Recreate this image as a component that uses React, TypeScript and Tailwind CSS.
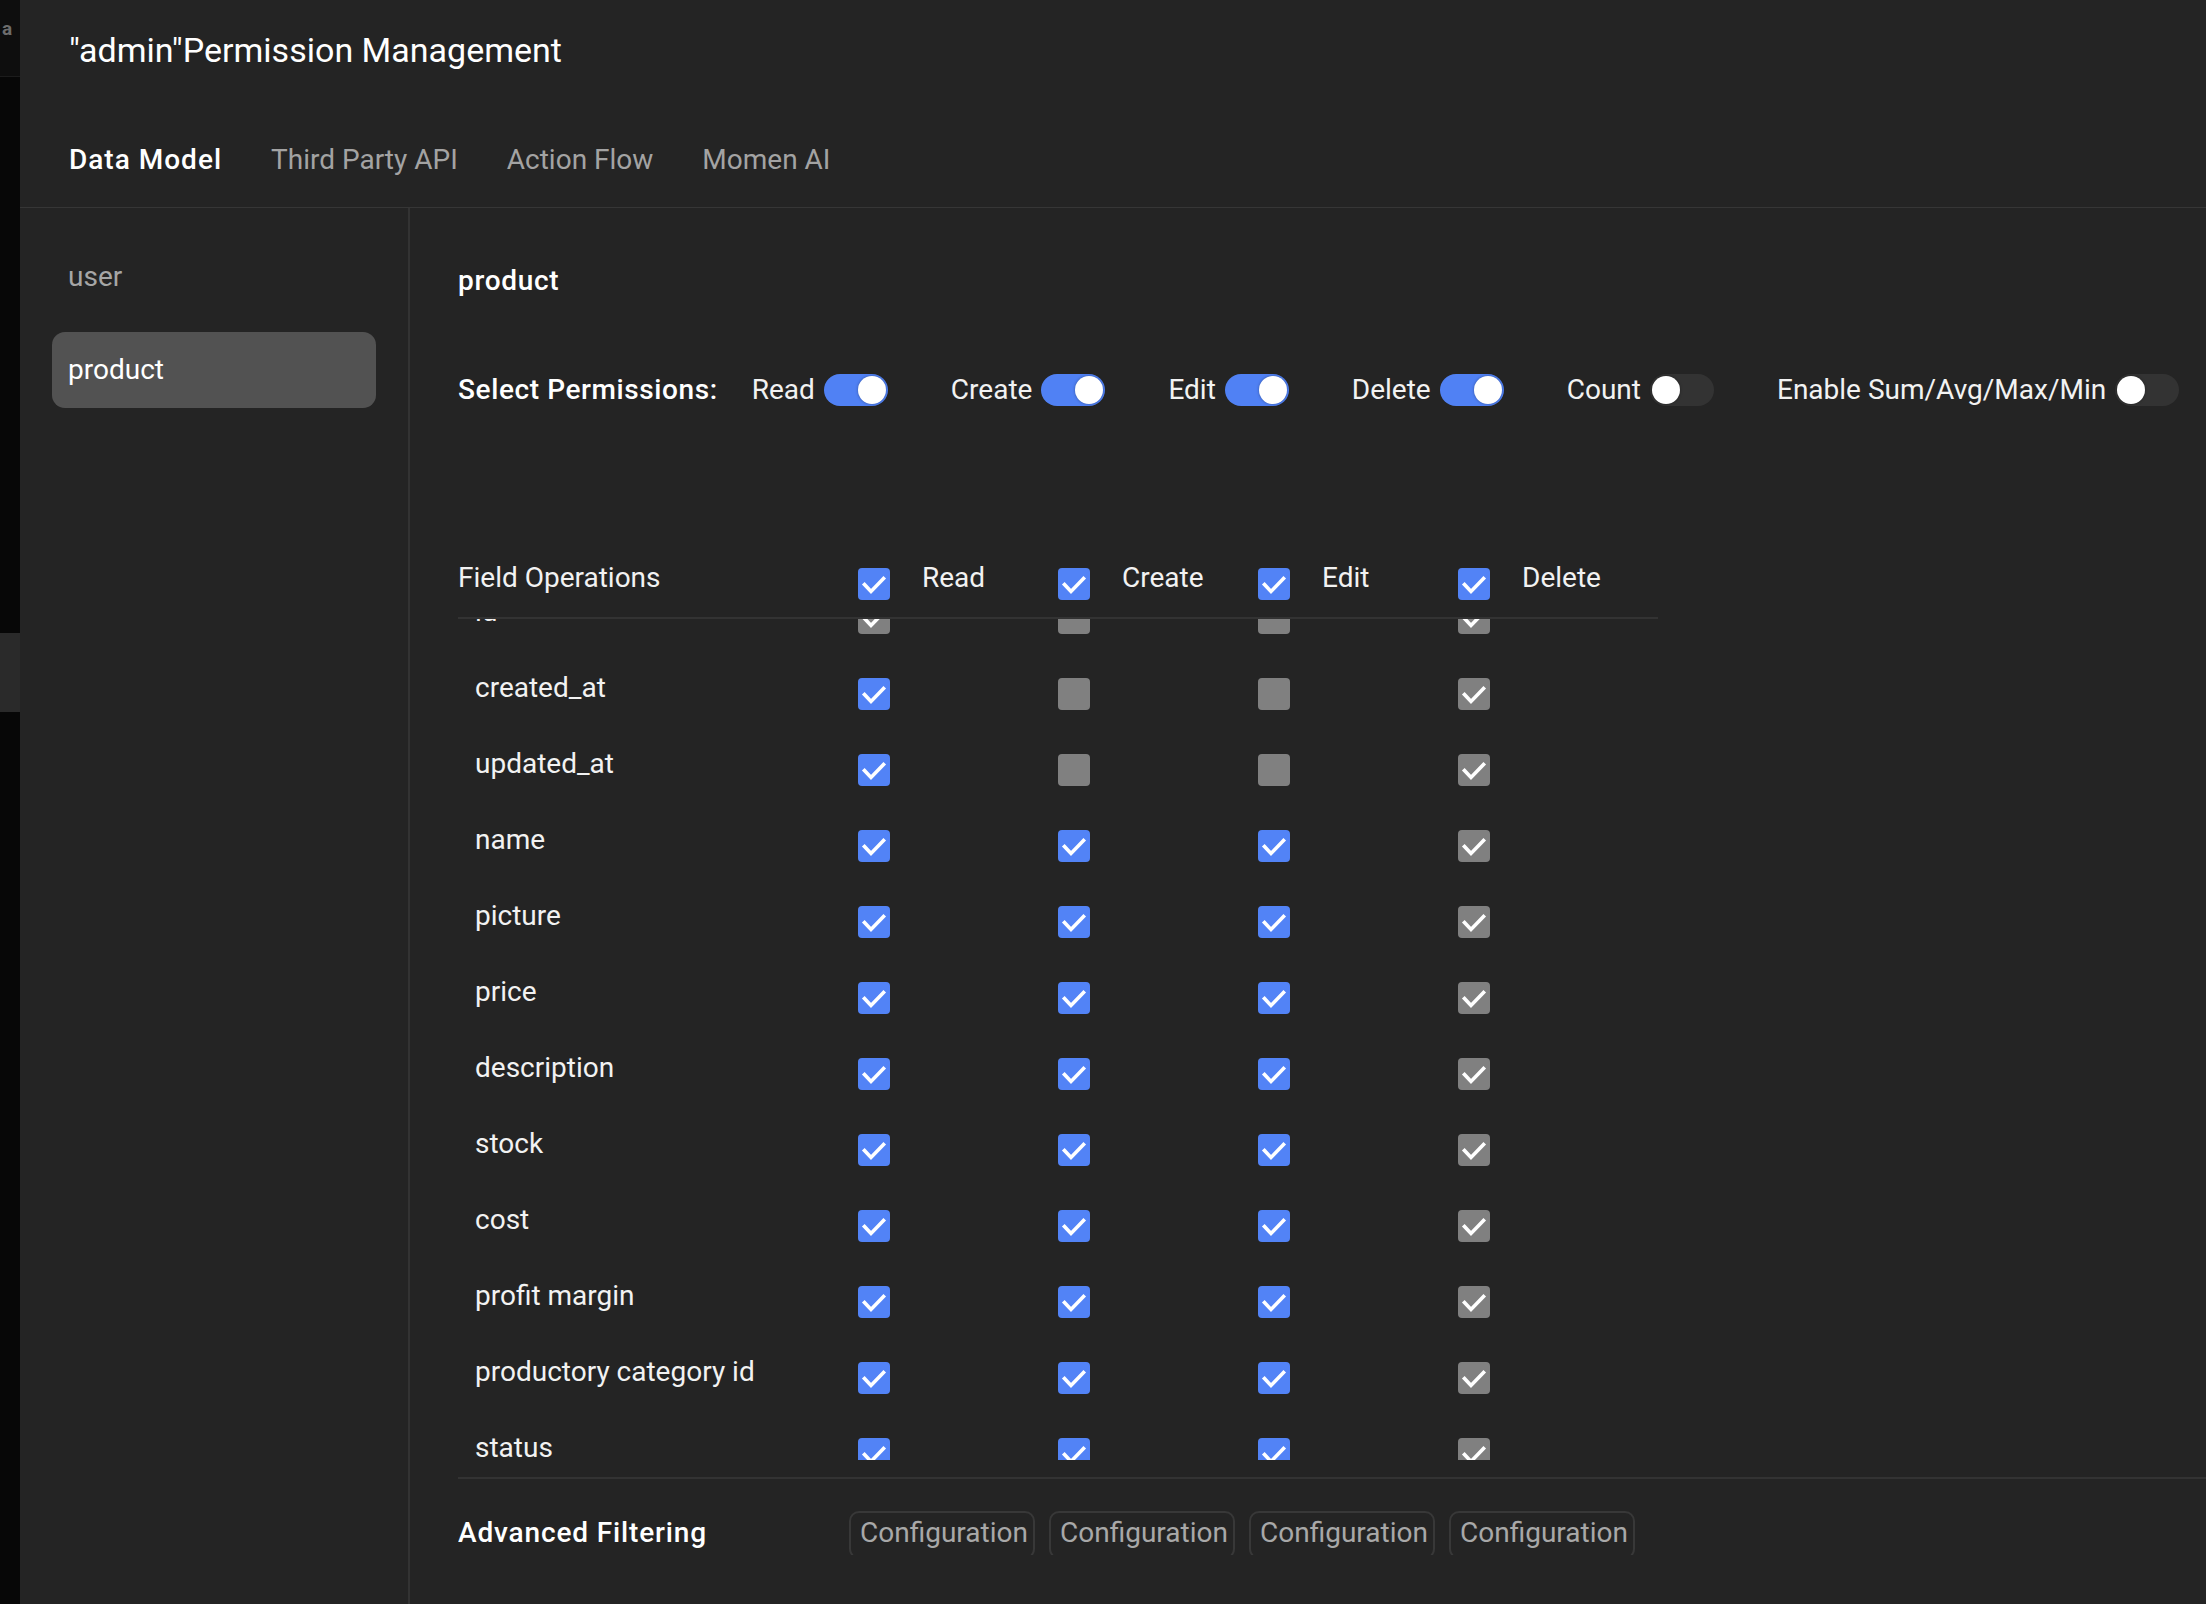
import React from "react";

type CB = "b" | "g" | "gc";

const rows: { name: string; v: CB[] }[] = [
  { name: "id", v: ["gc", "g", "g", "gc"] },
  { name: "created_at", v: ["b", "g", "g", "gc"] },
  { name: "updated_at", v: ["b", "g", "g", "gc"] },
  { name: "name", v: ["b", "b", "b", "gc"] },
  { name: "picture", v: ["b", "b", "b", "gc"] },
  { name: "price", v: ["b", "b", "b", "gc"] },
  { name: "description", v: ["b", "b", "b", "gc"] },
  { name: "stock", v: ["b", "b", "b", "gc"] },
  { name: "cost", v: ["b", "b", "b", "gc"] },
  { name: "profit margin", v: ["b", "b", "b", "gc"] },
  { name: "productory category id", v: ["b", "b", "b", "gc"] },
  { name: "status", v: ["b", "b", "b", "gc"] },
];

function Check({ kind }: { kind: CB }) {
  const bg = kind === "b" ? "bg-[#5283f6]" : "bg-[#808080]";
  return (
    <div className={`h-[32px] w-[32px] shrink-0 rounded-[4px] ${bg}`}>
      {kind !== "g" && (
        <svg viewBox="0 0 32 32" className="h-[32px] w-[32px]">
          <polyline
            points="6.5,16.5 13,23.5 25.5,10.5"
            fill="none"
            stroke="white"
            strokeWidth="3.6"
            strokeLinecap="square"
            strokeLinejoin="miter"
          />
        </svg>
      )}
    </div>
  );
}

function Toggle({ on }: { on: boolean }) {
  return (
    <div
      className={`flex h-[32px] w-[64px] shrink-0 items-center rounded-full px-[2px] ${
        on ? "justify-end bg-[#5081f4]" : "justify-start bg-[#333333]"
      }`}
    >
      <div className="h-[28px] w-[28px] rounded-full bg-white shadow-[0_0_3px_rgba(0,0,0,0.35)]" />
    </div>
  );
}

const perms: { label: string; on: boolean }[] = [
  { label: "Read", on: true },
  { label: "Create", on: true },
  { label: "Edit", on: true },
  { label: "Delete", on: true },
  { label: "Count", on: false },
  { label: "Enable Sum/Avg/Max/Min", on: false },
];

export default function App() {
  return (
    <div className="flex h-screen w-full overflow-hidden bg-[#242424] font-['Roboto',sans-serif] text-[#f2f2f2]">
      {/* left strip */}
      <div className="flex w-[20px] shrink-0 flex-col bg-[#070707]">
        <div className="h-[77px] border-b border-[#1c1c1c] bg-[#0e0e0e] pl-[2px] pt-[17px] text-[19px] font-bold leading-[24px] text-[#6c6c6c]">
          a
        </div>
        <div className="mt-[556px] h-[79px] bg-[#2a2a2a]" />
      </div>

      <div className="flex min-w-0 flex-1 flex-col">
        {/* header */}
        <div className="h-[208px] shrink-0 border-b border-[#363636] pl-[49px] pt-[30px]">
          <div className="text-[34px] leading-[40px] text-white">"admin"Permission Management</div>
          <div className="mt-[70px] flex gap-[49px] text-[28px] leading-[40px]">
            <span className="font-medium tracking-[1px] text-white">Data Model</span>
            <span className="text-[#a3a3a3]">Third Party API</span>
            <span className="text-[#a3a3a3]">Action Flow</span>
            <span className="text-[#a3a3a3]">Momen AI</span>
          </div>
        </div>

        <div className="flex min-h-0 flex-1">
          {/* sidebar */}
          <div className="flex w-[390px] shrink-0 flex-col gap-[17px] border-r-2 border-[#333333] px-[32px] pt-[31px]">
            <div className="flex h-[76px] items-center rounded-[13px] px-[16px] text-[28px] text-[#a6a6a6]">user</div>
            <div className="flex h-[76px] items-center rounded-[13px] bg-[#525252] px-[16px] text-[28px] text-white">
              product
            </div>
          </div>

          {/* main */}
          <div className="flex min-w-0 flex-1 flex-col pl-[48px] pt-[53px]">
            <div className="text-[28px] font-medium leading-[40px] tracking-[0.7px] text-white">product</div>

            <div className="mt-[69px] flex h-[40px] items-center text-[28px] leading-[40px]">
              <span className="mr-[34px] font-medium tracking-[0.6px] text-white">Select Permissions:</span>
              <div className="flex items-center gap-[63px]">
                {perms.map((p) => (
                  <div key={p.label} className="flex items-center gap-[9px]">
                    <span>{p.label}</span>
                    <Toggle on={p.on} />
                  </div>
                ))}
              </div>
            </div>

            {/* field operations header */}
            <div className="mt-[152px] flex w-[1200px] items-start border-b-2 border-[#333333] pb-[17px] text-[28px] leading-[32px]">
              <div className="w-[400px]">Field Operations</div>
              {["Read", "Create", "Edit", "Delete"].map((l) => (
                <div key={l} className="flex w-[200px] items-start gap-[32px]">
                  <div className="mt-[6px]">
                    <Check kind="b" />
                  </div>
                  <span>{l}</span>
                </div>
              ))}
            </div>

            {/* scrolling rows */}
            <div className="h-[841px] w-[1200px] overflow-hidden">
              <div className="-mt-[45px]">
                {rows.map((r) => (
                  <div key={r.name} className="flex h-[76px] items-center text-[28px] leading-[32px]">
                    <div className="w-[400px] pl-[17px]">{r.name}</div>
                    {r.v.map((k, i) => (
                      <div key={i} className="w-[200px]">
                        <div className="mt-[12px]">
                          <Check kind={k} />
                        </div>
                      </div>
                    ))}
                  </div>
                ))}
              </div>
            </div>

            {/* footer */}
            <div className="mt-[17px] h-[78px] overflow-hidden border-t-2 border-[#333333] pt-[32px]">
              <div className="flex items-start text-[28px]">
                <div className="mt-[6px] w-[391px] font-medium leading-[32px] tracking-[0.85px] text-white">
                  Advanced Filtering
                </div>
                <div className="flex gap-[14px]">
                  {[0, 1, 2, 3].map((i) => (
                    <div
                      key={i}
                      className="flex h-[48px] w-[186px] items-start rounded-[10px] border-2 border-[#383838] px-[9px] pt-[4px] leading-[32px] text-[#a8a8a8]"
                    >
                      Configuration
                    </div>
                  ))}
                </div>
              </div>
            </div>
          </div>
        </div>
      </div>
    </div>
  );
}
